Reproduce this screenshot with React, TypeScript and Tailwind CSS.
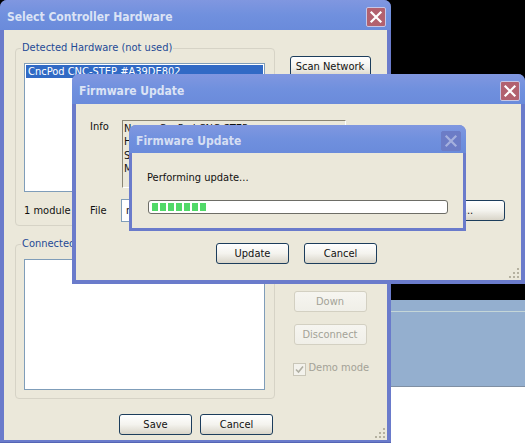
import React from "react";

const font = "font-['DejaVu_Sans_Condensed','DejaVu_Sans',sans-serif]";

function Close({ active }: { active: boolean }) {
  return (
    <div className={`flex items-center justify-center w-[20px] h-[20px] rounded-[2px] border ${active ? "bg-[#b2616f] border-[#c6c6e6]" : "bg-[#6c7cc6] border-[#6c7cc6]"}`}>
      <svg width="14" height="14" viewBox="0 0 14 14">
        <path d="M2.5 2.5 L11.5 11.5 M11.5 2.5 L2.5 11.5" stroke={active ? "#ffffff" : "#a5b0de"} strokeWidth="2.2" strokeLinecap="square" />
      </svg>
    </div>
  );
}

function Title({ text, active = true, h = 30 }: { text: string; active?: boolean; h?: number }) {
  return (
    <div
      className={`flex items-center justify-between shrink-0 rounded-t-[7px] bg-gradient-to-b from-[#8097e0] via-[#7090de] to-[#6a8bdb] pl-[7px] pr-[5px] pt-[4px] ${h === 30 ? "h-[30px]" : "h-[28px]"}`}
    >
      <span className={`font-bold text-[12px] ${active ? "text-[#dbe3f5]" : "text-[#d5def3]"}`}>{text}</span>
      <Close active={active} />
    </div>
  );
}

function Btn({ children, disabled, w = "w-[73px]" }: { children: React.ReactNode; disabled?: boolean; w?: string }) {
  return (
    <div
      className={`flex items-center justify-center h-[21px] pt-[2px] rounded-[3px] border text-[11px] shrink-0 ${w} ${
        disabled
          ? "border-[#d3d0c2] bg-gradient-to-b from-[#f6f5f0] to-[#f0efe8] text-[#a3a297]"
          : "border-[#1c3d5c] bg-gradient-to-b from-[#ffffff] via-[#f4f3ee] to-[#d9d5c9] text-[#111111]"
      }`}
    >
      {children}
    </div>
  );
}

function Grip() {
  return (
    <svg width="11" height="11" viewBox="0 0 11 11" className="absolute right-[1px] bottom-[1px]">
      {[[8, 0], [8, 4], [4, 4], [8, 8], [4, 8], [0, 8]].map(([x, y], i) => (
        <rect key={i} x={x} y={y} width="2" height="2" fill="#b5b1a0" />
      ))}
    </svg>
  );
}

function Group({ label, className, children }: { label: string; className: string; children: React.ReactNode }) {
  return (
    <fieldset className={`border border-[#d6d3c6] rounded-[4px] pl-[8px] pr-[9px] ${className}`}>
      <legend className="-ml-[3px] px-[1px] text-[11px] leading-[14px] text-[#1f4a96]">{label}</legend>
      {children}
    </fieldset>
  );
}

function Progress() {
  return (
    <div className="flex items-center gap-[2px] w-[300px] h-[14px] ml-[16px] mt-[15px] rounded-[3px] border border-[#6d6d66] bg-white pl-[3px]">
      {[0, 1, 2, 3, 4, 5, 6].map((i) => (
        <div key={i} className="w-[6px] h-[8px] bg-[#51d968]" />
      ))}
    </div>
  );
}

export default function App() {
  return (
    <div className={`relative w-[525px] h-[444px] overflow-hidden flex flex-col bg-black ${font}`}>
      <div className="h-[300px] shrink-0 bg-black" />
      <div className="h-[87px] shrink-0 bg-[#94afcf] border-b border-[#7f8fa3] pt-[11px]">
        <div className="h-px bg-[#c4d6d8]" />
      </div>
      <div className="flex-1 bg-white" />

      {/* Select Controller Hardware */}
      <div className="absolute left-0 top-0 w-[391px] h-[443px] flex flex-col rounded-t-[7px] bg-[#6a7bcb] shadow-[inset_0_-1px_0_#5565b5]">
        <Title text="Select Controller Hardware" />
        <div className="relative flex-1 mx-[4px] mb-[3px] bg-[#ebe8da] flex pl-[11px]">
          <div className="w-[260px] flex flex-col pt-[11px] shrink-0">
            <Group label="Detected Hardware (not used)" className="h-[185px]">
              <div className="mt-[8px] h-[129px] border border-[#7f9db9] bg-white p-px">
                <div className="h-[13px] leading-[13px] bg-[#316ac5] text-white text-[11px] pl-[2px]">CncPod CNC-STEP #A39DE802</div>
              </div>
              <div className="mt-[12px] text-[11px] leading-[14px] text-[#111111]">1 module found</div>
            </Group>
            <Group label="Connected Hardware" className="mt-[11px] h-[162px]">
              <div className="mt-[8px] h-[131px] border border-[#7f9db9] bg-white" />
            </Group>
            <div className="flex gap-[8px] justify-end mr-[2px] mt-[15px]">
              <Btn>Save</Btn>
              <Btn>Cancel</Btn>
            </div>
          </div>
          <div className="flex flex-col pl-[22px] pt-[26px] items-center w-[86px] shrink-0 ml-[1px]">
            <Btn w="w-[81px]">Scan Network</Btn>
            <div className="h-[214px] shrink-0" />
            <Btn disabled>Down</Btn>
            <div className="h-[12px] shrink-0" />
            <Btn disabled>Disconnect</Btn>
            <div className="flex items-center gap-[3px] mt-[16px] text-[11px] text-[#a3a297] whitespace-nowrap w-[75px]">
              <div className="w-[13px] h-[13px] border border-[#c9c6b8] bg-[#f3f2ec] flex items-center justify-center shrink-0">
                <svg width="9" height="9" viewBox="0 0 9 9"><path d="M1 4.5 L3.5 7 L8 1.5" fill="none" stroke="#b0afa3" strokeWidth="1.6" /></svg>
              </div>
              <span className="relative -top-px">Demo mode</span>
            </div>
          </div>
          <Grip />
        </div>
      </div>

      {/* Firmware Update (back) */}
      <div className="absolute left-[72px] top-[74px] w-[453px] h-[210px] flex flex-col rounded-t-[7px] bg-[#6a7bcb]">
        <Title text="Firmware Update" />
        <div className="relative flex-1 mx-[4px] mb-[4px] bg-[#ebe8da] flex flex-col pl-[14px] pt-[16px]">
          <div className="flex">
            <span className="w-[32px] text-[11px] leading-[14px] text-[#111111]">Info</span>
            <div className="w-[224px] h-[68px] border-t border-l border-[#8a8574] border-r-white border-b-white border-r border-b text-[11px] leading-[13.4px] text-[#111111] overflow-hidden pl-px pt-px">
              <div className="flex"><span className="w-[35px]">Name:</span><span>CncPod CNC-STEP</span></div>
              <div>Hardware: 1.0</div>
              <div>Serial: A39DE802</div>
              <div>Mode: Demo</div>
            </div>
          </div>
          <div className="flex items-center mt-[11px]">
            <span className="w-[31px] pt-[2px] text-[11px] text-[#111111]">File</span>
            <div className="w-[308px] h-[23px] border border-[#7f9db9] bg-white text-[11px] leading-[22px] pl-[4px] text-[#111111]">new_firmware.bin</div>
            <div className="ml-[3px]"><Btn w="w-[73px]">...</Btn></div>
          </div>
          <div className="flex justify-center gap-[15px] mt-[21px] pr-[18px]">
            <Btn>Update</Btn>
            <Btn>Cancel</Btn>
          </div>
          <Grip />
        </div>
      </div>

      {/* Firmware Update (front) */}
      <div className="absolute left-[129px] top-[125px] w-[337px] h-[106px] flex flex-col rounded-t-[7px] bg-[#6a7bcb]">
        <Title text="Firmware Update" active={false} h={28} />
        <div className="flex-1 mx-[3px] mb-[3px] bg-[#ebe8da]">
          <div className="ml-[15px] mt-[18px] text-[11px] leading-[14px] text-[#111111]">Performing update...</div>
          <Progress />
        </div>
      </div>
    </div>
  );
}
